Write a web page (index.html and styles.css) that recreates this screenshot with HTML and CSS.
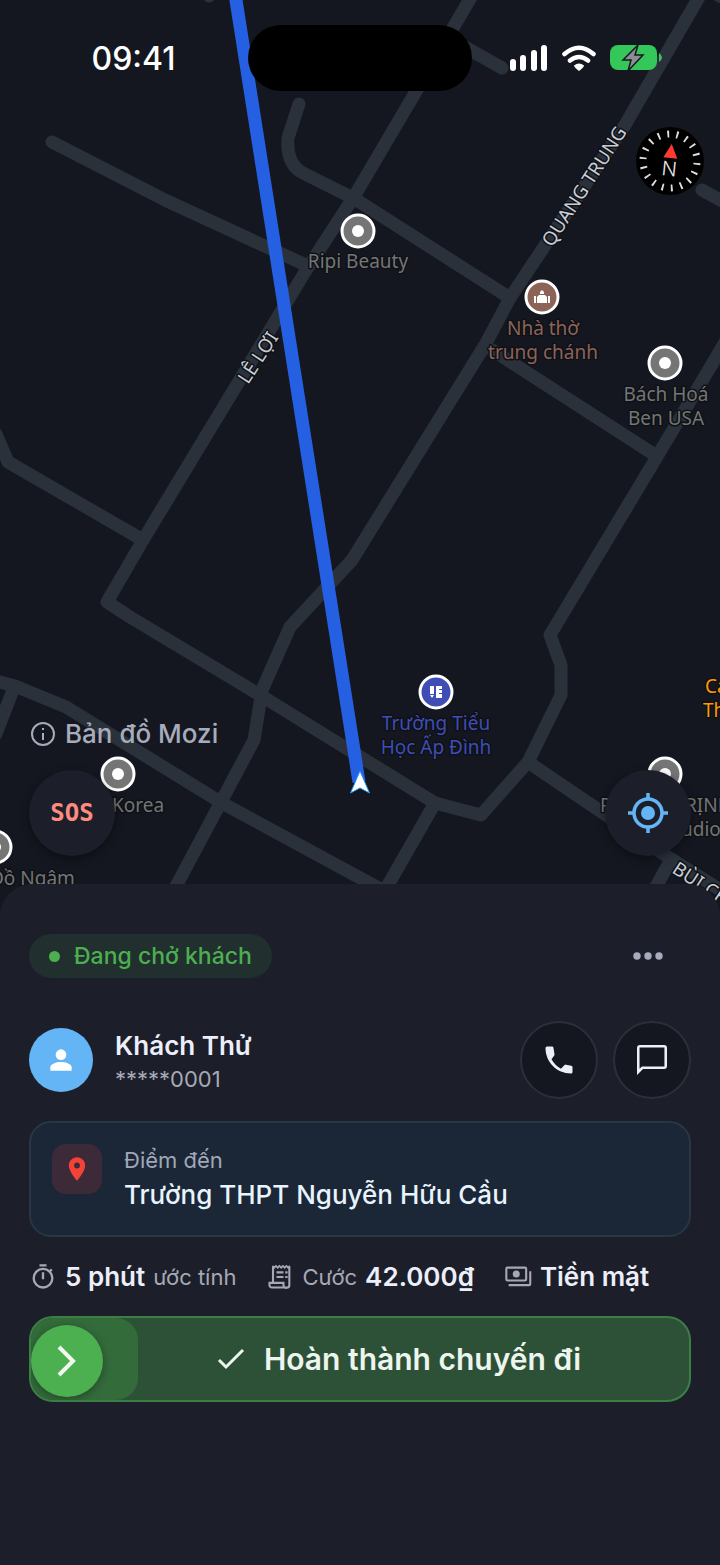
FILE: index.html
```html
<!DOCTYPE html>
<html lang="vi">
<head>
<meta charset="utf-8">
<meta name="viewport" content="width=device-width, initial-scale=1">
<title>Chuyến đi</title>
<link rel="stylesheet" href="styles.css">
</head>
<body>
<main class="screen">
  <section class="map-area" aria-label="Bản đồ">
    <svg class="map" viewBox="0 0 720 930" preserveAspectRatio="xMidYMin slice">
      <g class="roads">
        <path d="M474-8 418 88 355 195 305 272 143 540 107 602 130 617 260 695 435 803 481 815 528 762 561 695V665L550 635 655 460 730 334"/>
        <path d="M702-8 625 125 510 298 485 345 352 560 290 627 262 690 254 740 174 890"/>
        <path d="M52 142 165 200 308 266"/>
        <path d="M299 104 288 138Q286 166 305 174L355 199 510 298"/>
        <path d="M492 350 655 455"/>
        <path d="M-4 434 8 462 143 540"/>
        <path d="M-8 680 15 686 66 707 222 803 386 892"/>
        <path d="M13 690-4 734"/>
        <path d="M435 803 384 892"/>
        <path d="M528 762 668 857 730 896M668 865 652 894"/>
        <path d="M440 33 502 68M702 190 735 208M716-6 735 4M209-4V-8"/>
      </g>
      <path class="route" d="M234.700-8 359 782"/>
      <path class="puck" d="M360 771 369.500 793 360 788 350.500 793Z"/>

      <g class="poi poi-grey">
        <g><circle cx="358" cy="231" r="16"/><circle class="dot" cx="358" cy="231" r="6"/></g>
        <g><circle cx="665" cy="363" r="16"/><circle class="dot" cx="665" cy="363" r="6"/></g>
        <g><circle cx="118" cy="774" r="16"/><circle class="dot" cx="118" cy="774" r="6"/></g>
        <g><circle cx="665" cy="774" r="16"/><circle class="dot" cx="665" cy="774" r="6"/></g>
        <g><circle cx="-5" cy="847" r="16"/><circle class="dot" cx="-5" cy="847" r="6"/></g>
        <text x="358" y="268">Ripi Beauty</text>
        <text x="666" y="401">Bách Hoá<tspan x="666" dy="24">Ben USA</tspan></text>
        <text class="from-left" x="112" y="812">Korea</text>
        <text class="from-left" x="-10" y="885">Đồ Ngâm</text>
        <text class="from-left" x="600" y="812">P</text>
        <text class="from-left" x="685" y="812">RỊNH</text>
        <text class="from-left" x="681" y="836">udio</text>
      </g>
      <g class="poi poi-church">
        <circle cx="542" cy="297" r="16"/>
        <path class="glyph" d="M534 296h2v7h-2zM548 296h2v7h-2zM537 303v-6l2-2h6l2 2v6zM540 294v-2l2-2 2 2v2z"/>
        <text x="543" y="335">Nhà thờ<tspan x="543" dy="24">trung chánh</tspan></text>
      </g>
      <g class="poi poi-school">
        <circle cx="436" cy="692" r="16"/>
        <path class="glyph" d="M430 686h4v8h-4zM430 695h4l-2 3zM436 686h6v3h-3v1h3v3h-3v1h3v4h-6z"/>
        <text x="436" y="730">Trường Tiểu<tspan x="436" dy="24">Học Ấp Đình</tspan></text>
      </g>
      <g class="poi poi-food">
        <text class="from-left" x="705" y="693">Cafe</text>
        <text class="from-left" x="703" y="717">Thu</text>
      </g>
      <g class="street">
        <text transform="translate(552 248) rotate(-57)">QUANG TRUNG</text>
        <text transform="translate(248 385) rotate(-57)">LÊ LỢI</text>
        <text transform="translate(671 872) rotate(33)">BÙI CHU</text>
      </g>
    </svg>

    <header class="status-bar">
      <time class="clock">09:41</time>
      <div class="island"></div>
      <div class="status-icons">
        <svg width="38" height="26" viewBox="0 0 38 26" role="img" aria-label="Sóng"><g fill="#fff"><rect y="14" width="6" height="12" rx="3"/><rect x="10" y="10" width="6" height="16" rx="3"/><rect x="21" y="5" width="6" height="21" rx="3"/><rect x="31" width="6" height="26" rx="3"/></g></svg>
        <svg width="36" height="26" viewBox="0 0 36 26" role="img" aria-label="Wi-Fi"><g fill="none" stroke="#fff" stroke-width="4.500" stroke-linecap="round"><path d="M3.500 9Q18-3.500 32.500 9M9 15.500Q18 8.500 27 15.500"/></g><path fill="#fff" d="M13 20.500Q18 16.500 23 20.500 23 22 18 26 13 22 13 20.500Z"/></svg>
        <svg width="53" height="28" viewBox="0 0 53 28" role="img" aria-label="Pin đang sạc"><rect y="1" width="47" height="25" rx="8" fill="#34c759"/><path d="M49 9Q55 13.500 49 18Z" fill="#34c759"/><path d="M28 1 13 16h8l-3 11 15-16h-8Z" fill="#8d8d93" stroke="#14181f" stroke-width="1.500"/></svg>
      </div>
    </header>

    <button class="compass" aria-label="La bàn">
      <svg viewBox="0 0 68 68"><g transform="rotate(6 34 34)"><circle class="ticks" cx="34" cy="34" r="27" pathLength="180"/><path fill="#ff3b30" d="M34 17 41 31H27Z"/><text x="34" y="49" text-anchor="middle">N</text></g></svg>
    </button>

    <div class="map-footer">
      <a class="attribution" href="#map-info">
        <svg width="26" height="26" viewBox="0 0 26 26" fill="none" stroke="currentColor" stroke-width="2"><circle cx="14" cy="13" r="11"/><path d="M14 12v7M14 7v2"/></svg>
        Bản đồ Mozi
      </a>
      <div class="map-buttons">
        <button class="round-btn sos">SOS</button>
        <button class="round-btn locate" aria-label="Vị trí của tôi">
          <svg width="42" height="42" viewBox="0 0 42 42" fill="none" stroke="#64b5f6" stroke-width="3.500"><circle cx="21" cy="21" r="14"/><circle cx="21" cy="21" r="7" fill="#64b5f6" stroke="none"/><path d="M21 1v6M21 35v6M1 21h6M35 21h6"/></svg>
        </button>
      </div>
    </div>
  </section>

  <section class="sheet">
    <div class="sheet-head">
      <span class="trip-status">Đang chở khách</span>
      <button class="more" aria-label="Thêm"><svg width="30" height="8" viewBox="0 0 30 8" fill="currentColor"><circle cx="4" cy="4" r="3.700"/><circle cx="15" cy="4" r="3.700"/><circle cx="26" cy="4" r="3.700"/></svg></button>
    </div>

    <div class="customer">
      <div class="avatar"><svg width="32" height="32" viewBox="0 0 24 24" fill="#fff"><circle cx="12" cy="8" r="4"/><path d="M4 20v-2.500C4 15 8.500 13.500 12 13.500s8 1.500 8 4V20Z"/></svg></div>
      <div class="customer-info">
        <h1>Khách Thử</h1>
        <p>*****0001</p>
      </div>
      <button class="contact" aria-label="Gọi"><svg width="36" height="36" viewBox="0 0 24 24" fill="currentColor"><path d="M7 3H4a1 1 0 0 0-1 1c0 9.390 7.610 17 17 17a1 1 0 0 0 1-1v-3.200a1 1 0 0 0-.8-1l-3.600-.7a1 1 0 0 0-.9.3l-2.400 2.400a16 16 0 0 1-6.300-6.300L8.700 9.100a1 1 0 0 0 .3-.9L8.300 3.900A1 1 0 0 0 7.300 3Z"/></svg></button>
      <button class="contact" aria-label="Nhắn tin"><svg width="36" height="36" viewBox="0 0 24 24" fill="currentColor"><path d="M20 2H4a2 2 0 0 0-2 2v18l4-4h14a2 2 0 0 0 2-2V4a2 2 0 0 0-2-2Zm.300 14.300H5.300L3.700 17.900V3.700h16.600Z"/></svg></button>
    </div>

    <div class="destination">
      <div class="pin"><svg width="28" height="28" viewBox="0 0 24 24" fill="#f44336"><path d="M12 2C8.130 2 5 5.130 5 9c0 5.250 7 13 7 13s7-7.750 7-13c0-3.870-3.130-7-7-7Zm0 9.500a2.500 2.500 0 1 1 0-5 2.500 2.500 0 0 1 0 5Z"/></svg></div>
      <div>
        <p>Điểm đến</p>
        <h2>Trường THPT Nguyễn Hữu Cầu</h2>
      </div>
    </div>

    <ul class="metrics">
      <li>
        <svg width="28" height="28" viewBox="0 0 24 24" fill="none" stroke="currentColor" stroke-width="2"><path d="M9 2h6M12 8v6M18 7l1.500-1.500"/><circle cx="12" cy="13" r="8"/></svg>
        <strong>5 phút</strong><span>ước tính</span>
      </li>
      <li>
        <svg width="28" height="28" viewBox="0 0 24 24" fill="none" stroke="currentColor" stroke-width="1.800"><path d="M6 16V3.500M20 3.500V19a2 2 0 0 1-2 2H5a2 2 0 0 1-2-2v-2h12v2a2 2 0 0 0 3 2M9 8h6M9 12h6M16.500 8h2M16.500 12h2"/><path stroke-width="1.500" d="M5.500 2.500 7 4l1.500-1.500L10 4l1.500-1.500L13 4l1.500-1.500L16 4l1.500-1.500L19 4l1.500-1.500"/></svg>
        <span>Cước</span><strong>42.000₫</strong>
      </li>
      <li>
        <svg width="28" height="28" viewBox="0 0 24 24" fill="none" stroke="currentColor" stroke-width="1.800"><rect x="2" y="4" width="17" height="11" rx="1"/><circle cx="10.500" cy="9.500" r="3" fill="currentColor" stroke="none"/><path d="M22.500 7v11a1 1 0 0 1-1 1H4"/></svg>
        <strong>Tiền mặt</strong>
      </li>
    </ul>

    <div class="swipe">
      <div class="swipe-fill"></div>
      <label class="swipe-label" for="finish"><svg width="32" height="32" viewBox="0 0 32 32" fill="none" stroke="currentColor" stroke-width="3"><path d="M4 17 11 24 28 7"/></svg>Hoàn thành chuyến đi</label>
      <input id="finish" type="range" min="0" max="100" value="0">
      <svg class="chevron" width="72" height="72" viewBox="0 0 72 72" fill="none" stroke="#f1f8f2" stroke-width="4"><path d="M28 22 42 36 28 50"/></svg>
    </div>
  </section>
</main>
</body>
</html>
```
FILE: styles.css
```css
* { box-sizing: border-box; margin: 0; padding: 0; }

body {
  background: #1c1f2a;
  color: #eceffa;
  font-family: Inter, "Noto Sans", sans-serif;
}

button { border: 0; background: none; color: inherit; font: inherit; cursor: pointer; }
svg { display: block; flex: none; }

.screen { min-height: 100vh; display: flex; flex-direction: column; overflow: hidden; }

/* Map */
.map-area {
  position: relative;
  min-height: 884px;
  display: flex;
  flex-direction: column;
  background: #14171f;
}
.map { position: absolute; top: 0; left: 0; width: 100%; height: calc(100% + 46px); background: #14171f; }
.roads path { fill: none; stroke: #2a313b; stroke-width: 13; stroke-linecap: round; stroke-linejoin: round; }
.route { stroke: #2560e2; stroke-width: 13; }
.puck { fill: #fff; stroke: #2196f3; stroke-width: 1; }
.poi circle { stroke: #fff; stroke-width: 3; }
.poi .dot { fill: #fff; stroke: none; }
.poi .glyph { fill: #fff; }
.poi text, .street text {
  font-family: "Noto Sans", sans-serif;
  font-size: 19px;
  paint-order: stroke;
  stroke: #0e1116;
  stroke-width: 3px;
  stroke-linejoin: round;
}
.poi text { text-anchor: middle; }
.poi .from-left { text-anchor: start; }
.poi-grey { fill: #757575; }
.poi-church { fill: #8d6358; }
.poi-school { fill: #3f4db5; }
.poi-food { fill: #ff9800; }
.street { fill: #c9ccd4; }

.status-bar {
  position: relative;
  display: grid;
  grid-template-columns: 1fr 224px 1fr;
  align-items: center;
  padding-top: 25px;
}
.clock { justify-self: center; padding-left: 19px; color: #fff; font-size: 32px; font-weight: 500; }
.island { height: 66px; border-radius: 33px; background: #000; }
.status-icons { display: flex; align-items: center; justify-self: center; gap: 13px; padding-right: 20px; }

.compass { position: relative; align-self: flex-end; width: 68px; height: 68px; margin: 36px 16px 0; border-radius: 50%; background: #000; }
.compass text { fill: #e6e6e6; font-size: 20px; font-weight: 300; font-family: Inter, sans-serif; }
.ticks { fill: none; stroke: #ddd; stroke-width: 7; stroke-dasharray: 2 8; stroke-dashoffset: 1; }

.map-footer { position: relative; margin-top: auto; padding: 0 29px 28px; }
.attribution {
  display: inline-flex;
  align-items: center;
  gap: 10px;
  color: #a6acbc;
  font-size: 26px;
  font-weight: 500;
  line-height: 32px;
  text-decoration: none;
}
.map-buttons { display: flex; justify-content: space-between; margin-top: 19px; }
.round-btn {
  display: grid;
  place-items: center;
  width: 86px;
  height: 86px;
  border-radius: 50%;
  background: #1c1f2a;
  box-shadow: 0 3px 10px #0006;
}
.sos { color: #ff8a80; font: 700 24px "DejaVu Sans Mono", monospace; }

/* Trip sheet */
.sheet {
  position: relative;
  flex: 1;
  display: flex;
  flex-direction: column;
  padding: 50px 29px 32px;
  border-radius: 32px 32px 0 0;
  background: #1c1f2a;
}
.sheet-head { display: flex; justify-content: space-between; align-items: center; }
.trip-status {
  display: flex;
  align-items: center;
  gap: 14px;
  height: 44px;
  padding: 0 20px;
  border-radius: 22px;
  background: #212f2e;
  color: #4caf50;
  font-size: 23px;
  font-weight: 500;
}
.trip-status::before { content: ""; width: 11px; height: 11px; border-radius: 50%; background: currentColor; }
.more { padding: 18px 28px; color: #a6acbc; }

.customer { display: flex; align-items: center; gap: 15px; margin-top: 43px; }
.avatar { display: grid; place-items: center; width: 64px; height: 64px; border-radius: 50%; background: #64b5f6; }
.customer-info { flex: 1; padding: 3px 0 0 7px; }
.customer-info h1 { font-size: 26px; font-weight: 600; line-height: 34px; }
.customer-info p { color: #a6a9b5; font-size: 22px; line-height: 32px; }
.contact {
  display: grid;
  place-items: center;
  width: 78px;
  height: 78px;
  border: 2px solid #2c2f3b;
  border-radius: 50%;
  background: #14171f;
}

.destination {
  display: flex;
  gap: 22px;
  margin-top: 22px;
  padding: 21px;
  border: 2px solid #293644;
  border-radius: 22px;
  background: #1b2636;
}
.pin { display: grid; place-items: center; width: 50px; height: 50px; border-radius: 14px; background: #3c2a38; }
.destination p { color: #a0a8b8; font-size: 22px; line-height: 32px; }
.destination h2 { color: #e8f4fd; font-size: 26px; font-weight: 500; line-height: 38px; }

.metrics {
  display: flex;
  flex-wrap: wrap;
  gap: 8px 30px;
  margin-top: 22px;
  color: #a6a9b5;
  list-style: none;
}
.metrics li { display: flex; align-items: center; gap: 8px; line-height: 36px; }
.metrics span { font-size: 22px; }
.metrics strong { color: #eceffa; font-size: 26px; font-weight: 600; }

.swipe {
  display: grid;
  align-items: center;
  height: 86px;
  margin-top: 21px;
  border: 2px solid #3c7f45;
  border-radius: 24px;
  background: #2d5137;
  overflow: hidden;
}
.swipe > * { grid-area: 1 / 1; }
.swipe-fill { width: 107px; height: 82px; border-radius: 22px; background: #336b3b; }
.swipe-label {
  display: flex;
  align-items: center;
  justify-content: center;
  gap: 17px;
  padding-left: 76px;
  color: #edf5ef;
  font-size: 30px;
  font-weight: 600;
}
.swipe input { width: 100%; height: 72px; margin-top: 4px; appearance: none; background: none; cursor: pointer; }
.swipe input::-webkit-slider-thumb {
  appearance: none;
  width: 72px;
  height: 72px;
  border-radius: 50%;
  background: #4caf50;
  box-shadow: 0 2px 8px #0005;
}
.chevron { margin-top: 4px; pointer-events: none; }
```
